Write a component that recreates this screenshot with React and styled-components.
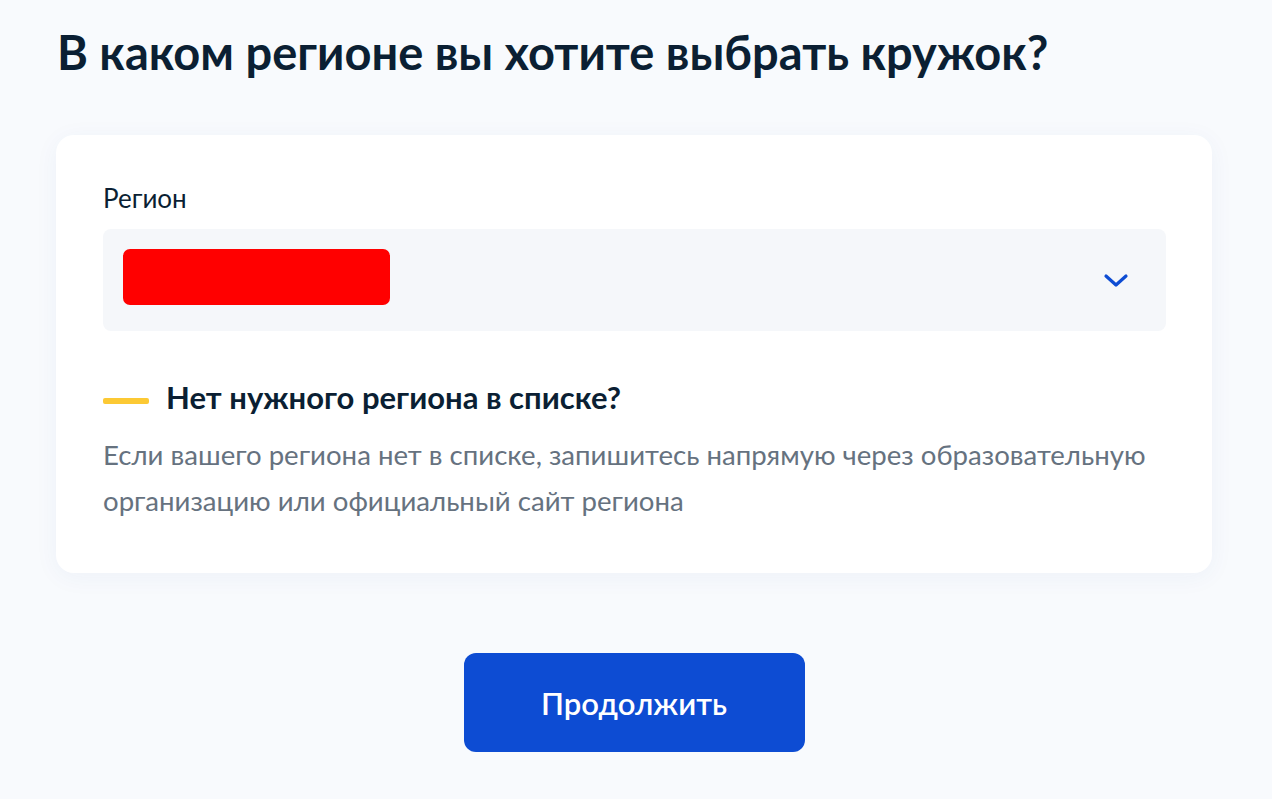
import styled, { createGlobalStyle } from "styled-components";

const Global = createGlobalStyle`
  html, body {
    margin: 0;
    background: #f8fafd;
    font-family: Lato, "Noto Sans", sans-serif;
    color: #0b1f33;
  }
`;

const Page = styled.main`
  padding: 25px 60px 40px 56px;
  display: flex;
  flex-direction: column;
`;

const Title = styled.h1`
  margin: 0 0 0 1px;
  font-size: 47px;
  line-height: 55px;
  font-weight: 700;
`;

const Card = styled.section`
  margin-top: 55px;
  background: #ffffff;
  border-radius: 18px;
  box-shadow: 0 4px 24px rgba(40, 80, 160, 0.05);
  padding: 48px 46px 49px 47px;
  display: flex;
  flex-direction: column;
`;

const Label = styled.label`
  font-size: 26px;
  line-height: 30px;
  color: #0b1f33;
`;

const Select = styled.div`
  margin-top: 16px;
  height: 102px;
  background: #f5f7fa;
  border-radius: 8px;
  padding: 0 37px 0 20px;
  display: flex;
  align-items: center;
  justify-content: space-between;
`;

const Redacted = styled.div`
  width: 267px;
  height: 56px;
  margin-bottom: 6px;
  background: #ff0000;
  border-radius: 7px;
`;

const Hint = styled.div`
  margin-top: 48px;
  display: flex;
  align-items: center;
  gap: 17px;
`;

const Dash = styled.span`
  width: 46px;
  height: 6px;
  margin-top: 6px;
  border-radius: 2px;
  background: #fcc934;
`;

const HintTitle = styled.h3`
  margin: 0;
  font-size: 31px;
  line-height: 37px;
  font-weight: 700;
`;

const HintText = styled.p`
  margin: 16px 0 0;
  font-size: 27.6px;
  line-height: 46px;
  color: #66727f;
`;

const Actions = styled.div`
  display: flex;
  justify-content: center;
  margin-top: 80px;
`;

const Button = styled.button`
  width: 341px;
  height: 99px;
  border: none;
  border-radius: 12px;
  background: #0d4cd3;
  color: #ffffff;
  font-family: Lato, "Noto Sans", sans-serif;
  font-size: 31px;
  font-weight: 600;
`;

export default function App() {
  return (
    <>
      <Global />
      <Page>
        <Title>В каком регионе вы хотите выбрать кружок?</Title>
        <Card>
          <Label>Регион</Label>
          <Select>
            <Redacted />
            <svg width="26" height="18" viewBox="0 0 26 18">
              <path d="M3 5l10 9 10-9" fill="none" stroke="#0d4cd3" strokeWidth="3.2" strokeLinecap="round" strokeLinejoin="round" />
            </svg>
          </Select>
          <Hint>
            <Dash />
            <HintTitle>Нет нужного региона в списке?</HintTitle>
          </Hint>
          <HintText>
            Если вашего региона нет в списке, запишитесь напрямую через образовательную
            организацию или официальный сайт региона
          </HintText>
        </Card>
        <Actions>
          <Button>Продолжить</Button>
        </Actions>
      </Page>
    </>
  );
}
